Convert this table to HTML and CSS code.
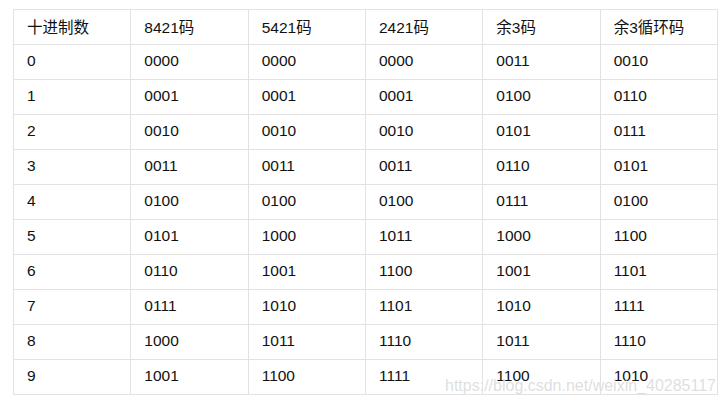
FILE: index.html
```html
<!DOCTYPE html>
<html lang="zh-CN">
<head>
<meta charset="utf-8">
<title>码制表</title>
<link rel="stylesheet" href="styles.css">
</head>
<body>
<div class="wrap">
<table class="codes">
<thead>
<tr><th>十进制数</th><th>8421码</th><th>5421码</th><th>2421码</th><th>余3码</th><th>余3循环码</th></tr>
</thead>
<tbody>
<tr><td>0</td><td>0000</td><td>0000</td><td>0000</td><td>0011</td><td>0010</td></tr>
<tr><td>1</td><td>0001</td><td>0001</td><td>0001</td><td>0100</td><td>0110</td></tr>
<tr><td>2</td><td>0010</td><td>0010</td><td>0010</td><td>0101</td><td>0111</td></tr>
<tr><td>3</td><td>0011</td><td>0011</td><td>0011</td><td>0110</td><td>0101</td></tr>
<tr><td>4</td><td>0100</td><td>0100</td><td>0100</td><td>0111</td><td>0100</td></tr>
<tr><td>5</td><td>0101</td><td>1000</td><td>1011</td><td>1000</td><td>1100</td></tr>
<tr><td>6</td><td>0110</td><td>1001</td><td>1100</td><td>1001</td><td>1101</td></tr>
<tr><td>7</td><td>0111</td><td>1010</td><td>1101</td><td>1010</td><td>1111</td></tr>
<tr><td>8</td><td>1000</td><td>1011</td><td>1110</td><td>1011</td><td>1110</td></tr>
<tr><td>9</td><td>1001</td><td>1100</td><td>1111</td><td>1100</td><td>1010</td></tr>
</tbody>
</table>
<div class="watermark">https://blog.csdn.net/weixin_40285117</div>
</div>
</body>
</html>
```
FILE: styles.css
```css
html, body {
  margin: 0;
  padding: 0;
  background: #ffffff;
}
body {
  font-family: "Liberation Sans", Arial, "Noto Sans CJK SC", sans-serif;
  color: #111111;
}
.wrap {
  position: relative;
  padding: 9px 0 0 13px;
}
.codes {
  border-collapse: collapse;
  table-layout: fixed;
  width: 705px;
  font-size: 15.5px;
}
.codes th,
.codes td {
  border: 1px solid #e2e2e2;
  height: 32px;
  padding: 0 13px 2px 13px;
  text-align: left;
  font-weight: normal;
  vertical-align: middle;
  white-space: nowrap;
}
.watermark {
  position: absolute;
  left: 445px;
  top: 376px;
  font-size: 16px;
  line-height: 20px;
  color: rgba(190, 190, 190, 0.5);
  text-shadow: 0 0 1px rgba(255, 255, 255, 0.9);
  white-space: nowrap;
}
```
